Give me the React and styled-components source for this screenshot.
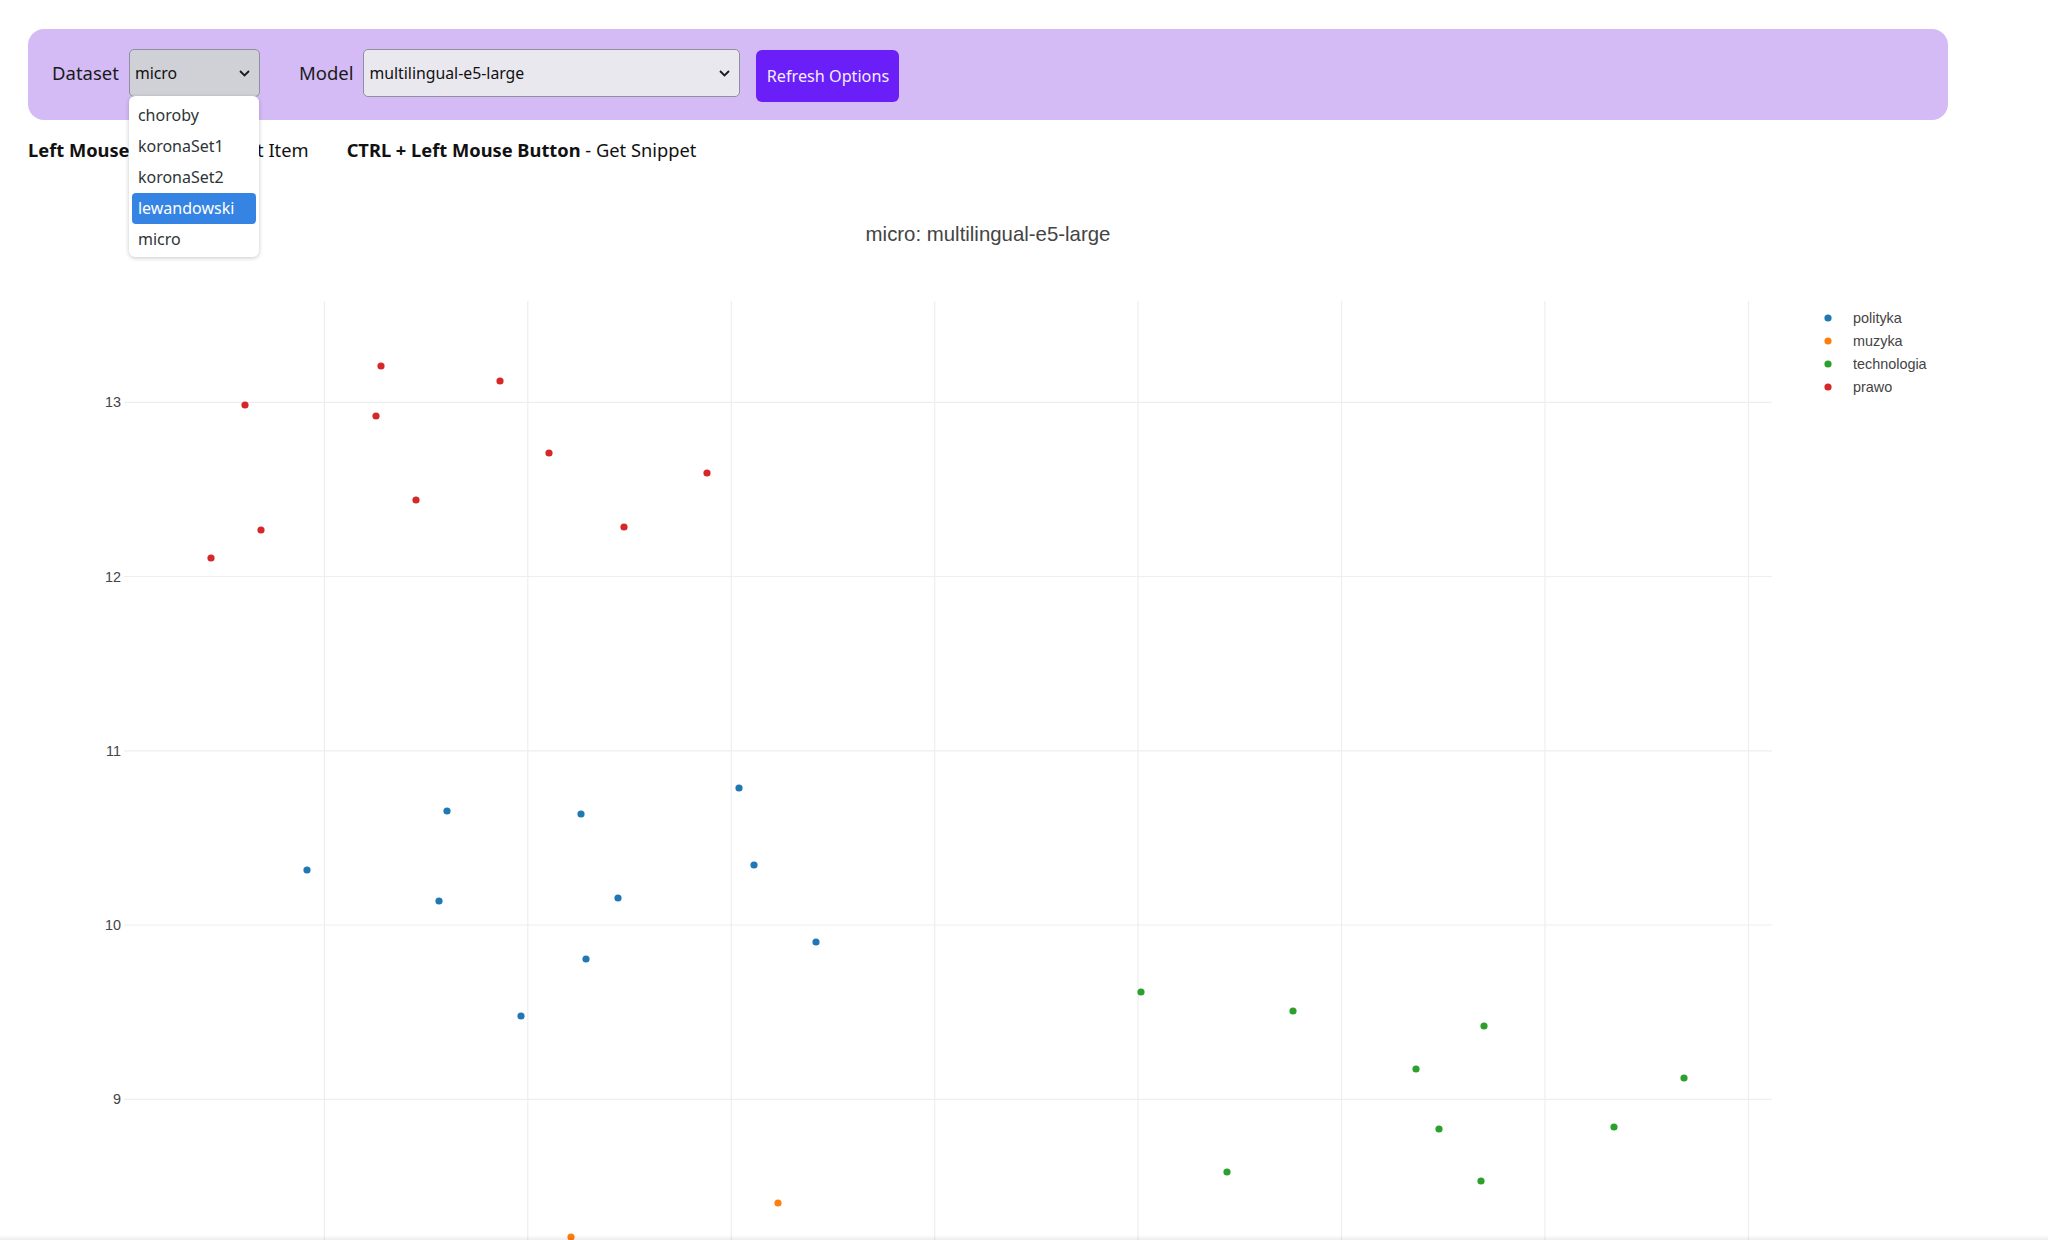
import React from "react";
import styled, { createGlobalStyle } from "styled-components";

const COLORS = {
    polityka: "#1f77b4",
    muzyka: "#ff7f0e",
    technologia: "#2ca02c",
    prawo: "#d62728",
};

// chart origin on the page: (28, 180)
const OX = 28;
const OY = 180;

const points = {
    prawo: [
        [245, 405], [381, 366], [376, 416], [500, 381], [549, 453],
        [416, 500], [707, 473], [624, 527], [261, 530], [211, 558],
    ],
    polityka: [
        [307, 870], [447, 811], [439, 901], [581, 814], [618, 898],
        [739, 788], [754, 865], [816, 942], [586, 959], [521, 1016],
    ],
    muzyka: [[778, 1203], [571, 1237]],
    technologia: [
        [1141, 992], [1293, 1011], [1484, 1026], [1416, 1069], [1684, 1078],
        [1439, 1129], [1614, 1127], [1227, 1172], [1481, 1181],
    ],
};

const xGrid = [324.4, 527.8, 731.3, 934.7, 1138.1, 1341.5, 1545, 1748.5];
const yTicks = [
    { v: 13, y: 402.3 },
    { v: 12, y: 576.5 },
    { v: 11, y: 750.8 },
    { v: 10, y: 925 },
    { v: 9, y: 1099.3 },
];
const PLOT = { left: 124, right: 1772, top: 301, bottom: 1300 };

const datasets = ["choroby", "koronaSet1", "koronaSet2", "lewandowski", "micro"];

const GlobalStyle = createGlobalStyle`
    html, body {
        margin: 0;
        padding: 0;
        background: #ffffff;
        overflow: hidden;
    }
    body {
        font-family: "Noto Sans", "Open Sans", sans-serif;
        color: #111;
    }
`;

const Page = styled.div`
    width: 1920px;
    padding: 29px 0 0 28px;
`;

const Toolbar = styled.div`
    display: flex;
    align-items: flex-start;
    height: 91px;
    padding: 20px 24px 0 24px;
    box-sizing: border-box;
    background-color: #d4bbf6;
    border-radius: 16px;
`;

const Label = styled.span`
    font-size: 18.5px;
    line-height: 48px;
    color: #1a1a1a;
    margin-right: 10px;
`;

const FieldGroup = styled.div`
    position: relative;
    display: flex;
    align-items: center;
    margin-right: ${(p) => p.$gap}px;
`;

const FakeSelect = styled.div`
    display: flex;
    align-items: center;
    justify-content: space-between;
    box-sizing: border-box;
    width: ${(p) => p.$width}px;
    height: 48px;
    padding: 0 9px 0 5px;
    border: 1px solid #8f8f9d;
    border-radius: 5px;
    background-color: ${(p) => (p.$open ? "#d0d0d7" : "#e9e8ee")};
    font-size: 15.8px;
    color: #111;
`;

const Chevron = () => (
    <svg width="11" height="7" viewBox="0 0 11 7">
        <path d="M1 1 L5.5 5.5 L10 1" fill="none" stroke="#1b1b1b" strokeWidth="1.8" />
    </svg>
);

const RefreshButton = styled.button`
    width: 143px;
    height: 52px;
    padding: 0;
    margin-top: 1px;
    border: none;
    border-radius: 6px;
    background-color: #6a1ff9;
    color: #f3edff;
    font-family: "Noto Sans", "Open Sans", sans-serif;
    font-size: 16.2px;
`;

const Menu = styled.ul`
    position: absolute;
    top: 47px;
    left: 0;
    width: 130px;
    box-sizing: border-box;
    margin: 0;
    padding: 4px 3px 2px 3px;
    list-style: none;
    background: #ffffff;
    border-radius: 6px;
    box-shadow: 0 1px 4px rgba(0, 0, 0, 0.22);
    z-index: 5;
`;

const MenuItem = styled.li`
    height: 31px;
    line-height: 31px;
    padding-left: 6px;
    border-radius: 4px;
    font-size: 16px;
    color: ${(p) => (p.$selected ? "#ffffff" : "#2e3436")};
    background-color: ${(p) => (p.$selected ? "#3584e4" : "transparent")};
`;

const Hints = styled.div`
    display: flex;
    gap: 38px;
    margin-top: 16px;
    height: 28px;
    line-height: 28px;
    font-size: 18.3px;
    color: #111;
`;

const Hint = styled.span`
    b {
        font-weight: 700;
    }
`;

const ChartWrap = styled.div`
    margin-top: 16px;
    width: 1920px;
    height: 1100px;
`;

const ChartText = styled.text`
    font-family: "Liberation Sans", Arial, sans-serif;
    fill: #444;
`;

const Chart = () => {
    const sx = (x) => x - OX;
    const sy = (y) => y - OY;
    return (
        <svg width="1920" height="1100" viewBox="0 0 1920 1100">
            <ChartText x={988 - OX} y={241 - OY} fontSize="20.4" textAnchor="middle">
                micro: multilingual-e5-large
            </ChartText>
            {xGrid.map((x) => (
                <line key={x} x1={sx(x)} x2={sx(x)} y1={sy(PLOT.top)} y2={sy(PLOT.bottom)} stroke="#eeeeee" strokeWidth="1.2" />
            ))}
            {yTicks.map((t) => (
                <g key={t.v}>
                    <line x1={sx(PLOT.left)} x2={sx(PLOT.right)} y1={sy(t.y)} y2={sy(t.y)} stroke="#eeeeee" strokeWidth="1.2" />
                    <ChartText x={sx(121)} y={sy(t.y) + 5} fontSize="14.4" textAnchor="end">
                        {t.v}
                    </ChartText>
                </g>
            ))}
            {Object.entries(points).map(([name, list]) =>
                list.map(([x, y], i) => (
                    <circle key={name + i} cx={sx(x)} cy={sy(y)} r="3.6" fill={COLORS[name]} />
                ))
            )}
            {Object.keys(COLORS).map((name, i) => (
                <g key={name}>
                    <circle cx={sx(1828)} cy={sy(318 + i * 23)} r="3.6" fill={COLORS[name]} />
                    <ChartText x={sx(1853)} y={sy(318 + i * 23) + 5} fontSize="14.4">
                        {name}
                    </ChartText>
                </g>
            ))}
        </svg>
    );
};

const BottomShade = styled.div`
    position: fixed;
    left: 0;
    right: 0;
    bottom: 0;
    height: 5px;
    background: linear-gradient(to bottom, rgba(0, 0, 0, 0), rgba(0, 0, 0, 0.07));
    pointer-events: none;
`;

export default function App() {
    return (
        <>
            <GlobalStyle />
            <Page>
                <Toolbar>
                    <Label>Dataset</Label>
                    <FieldGroup $gap={39}>
                        <FakeSelect $width={131} $open>
                            micro
                            <Chevron />
                        </FakeSelect>
                        <Menu>
                            {datasets.map((d) => (
                                <MenuItem key={d} $selected={d === "lewandowski"}>
                                    {d}
                                </MenuItem>
                            ))}
                        </Menu>
                    </FieldGroup>
                    <Label>Model</Label>
                    <FieldGroup $gap={16}>
                        <FakeSelect $width={377}>
                            multilingual-e5-large
                            <Chevron />
                        </FakeSelect>
                    </FieldGroup>
                    <RefreshButton>Refresh Options</RefreshButton>
                </Toolbar>
                <Hints>
                    <Hint>
                        <b>Left Mouse Button</b> - Select Item
                    </Hint>
                    <Hint>
                        <b>CTRL + Left Mouse Button</b> - Get Snippet
                    </Hint>
                </Hints>
                <ChartWrap>
                    <Chart />
                </ChartWrap>
            </Page>
            <BottomShade />
        </>
    );
}
